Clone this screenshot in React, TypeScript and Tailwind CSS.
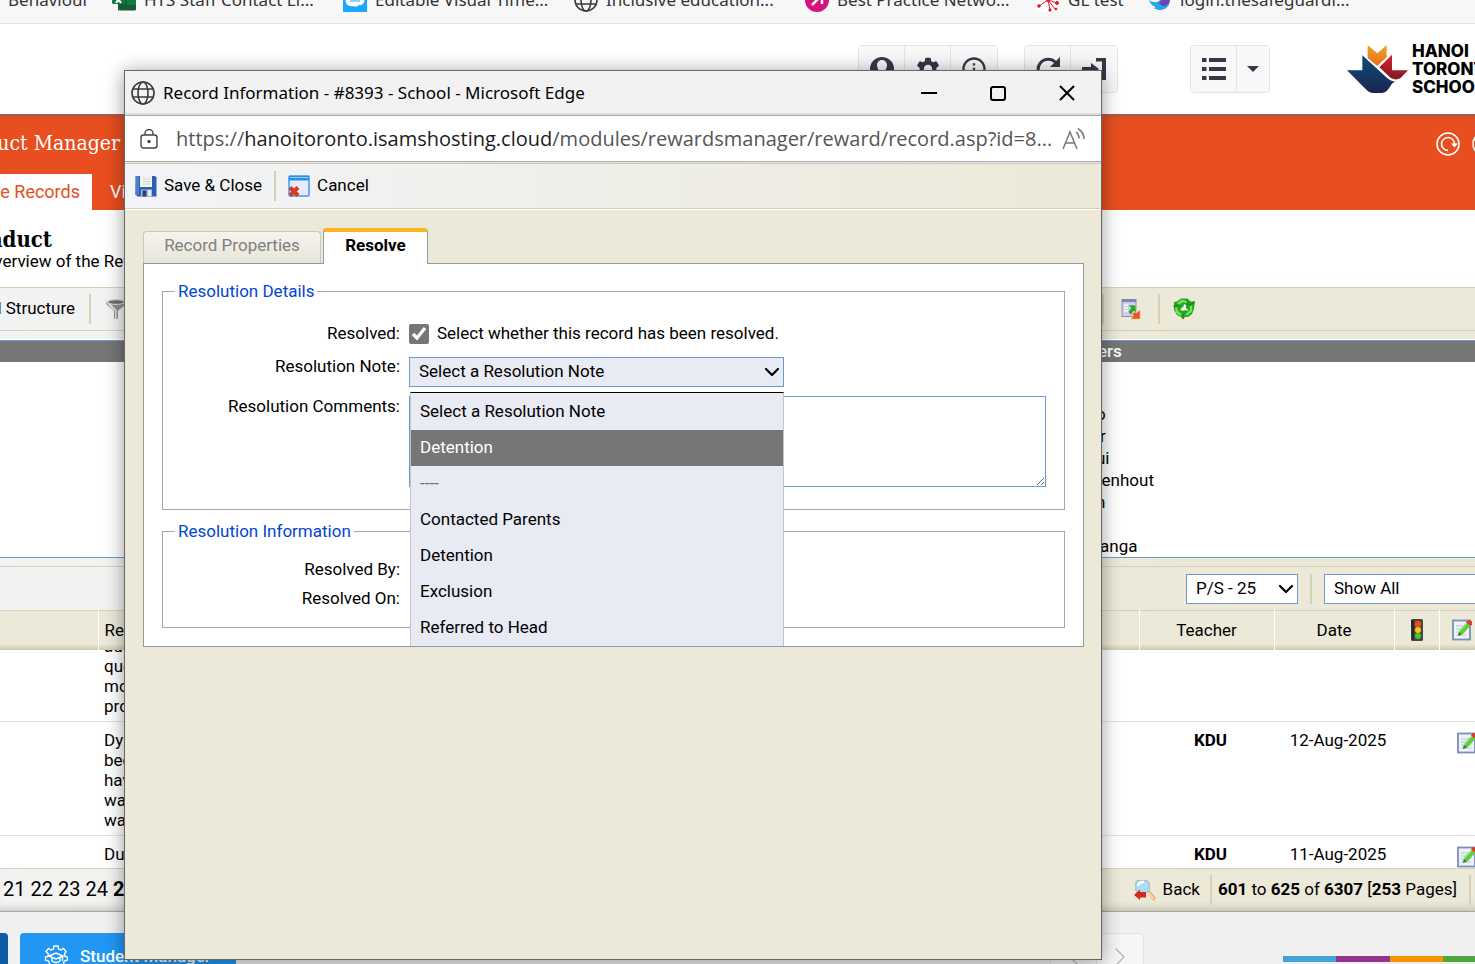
import type { ReactNode } from "react";
import { ChevronDown, ChevronLeft, ChevronRight } from "lucide-react";
import { MdInfoOutline, MdSettings } from "react-icons/md";

const RESOLUTION_NOTES = [
  { label: "Select a Resolution Note" },
  { label: "Detention", active: true },
  { label: "----", disabled: true },
  { label: "Contacted Parents" },
  { label: "Detention" },
  { label: "Exclusion" },
  { label: "Referred to Head" },
];

const TEACHERS = [
  { name: "o", indent: "pl-1" },
  { name: "r", indent: "pl-2" },
  { name: "ui", indent: "pl-1" },
  { name: "denhout", indent: "" },
  { name: "n", indent: "pl-1" },
  { name: "", indent: "" },
  { name: "anga", indent: "pl-2" },
];

const RECORDS = [
  { lines: ["add", "que", "mo", "pro"], teacher: "", date: "" },
  { lines: ["Dyl", "bec", "hav", "wa", "wa"], teacher: "KDU", date: "12-Aug-2025" },
  { lines: ["Du"], teacher: "KDU", date: "11-Aug-2025" },
];

function GlobeIcon() {
  return (
    <svg viewBox="0 0 24 24" className="size-6 shrink-0" fill="none" stroke="#3b3b3b" strokeWidth="1.6">
      <circle cx="12" cy="12" r="11" />
      <ellipse cx="12" cy="12" rx="5" ry="11" />
      <path d="M2 8h20M2 16h20" />
    </svg>
  );
}

function ExcelIcon() {
  return (
    <svg viewBox="0 0 24 24" className="size-6 shrink-0">
      <rect x="6" y="1" width="18" height="21" rx="1.5" fill="#21a366" />
      <path d="M6 12h18v9a1.5 1.5 0 0 1-1.5 1.5h-15A1.5 1.5 0 0 1 6 21z" fill="#185c37" />
      <path d="M15 12h9v5h-9z" fill="#107c41" />
      <rect y="3" width="13" height="13" rx="1.5" fill="#107c41" />
      <path d="M4 8l5 7M9 8l-5 7" stroke="#fff" strokeWidth="2" />
    </svg>
  );
}

function CloudTileIcon() {
  return (
    <svg viewBox="0 0 24 24" className="size-6 shrink-0">
      <path d="M0 0h24v24H0z" fill="#1aa7ff" />
      <path d="M7 18a5 5 0 0 1-4-7 4 4 0 0 1 6-4 5 5 0 0 1 8 1 4 4 0 0 1 4 6 4 4 0 0 1-5 3 5 5 0 0 1-6 1 4 4 0 0 1-3 0z" fill="#fff" />
      <path d="M7 13h10" stroke="#1aa7ff" />
    </svg>
  );
}

function PinkArrowIcon() {
  return (
    <svg viewBox="0 0 24 24" className="size-6 shrink-0">
      <circle cx="12" cy="12" r="12" fill="#d6127c" />
      <path d="M7 17l9-9M9 7.5h8V16" fill="none" stroke="#fff" strokeWidth="2.5" />
    </svg>
  );
}

function SparkIcon() {
  return (
    <svg viewBox="0 0 24 24" className="size-6 shrink-0" fill="#d9202a" stroke="#d9202a">
      <path d="M0 0h24v24H0z" fill="#fff" stroke="none" />
      <path d="M12 12L3 18M12 12l9 3M12 12l2 10M12 12L4 8M12 12l7-6M12 12l7 9" />
      <circle cx="3" cy="18" r="1.3" />
      <circle cx="21" cy="15" r="1.5" />
      <circle cx="14" cy="22" r="1.2" />
      <circle cx="20" cy="21" r="1" />
      <circle cx="12" cy="12" r="1.5" />
    </svg>
  );
}

function BirdIcon() {
  return (
    <svg viewBox="0 0 24 24" className="size-6 shrink-0">
      <path d="M1 12c4 3 9 3 11 0 3-3 7-2 10 1-1 6-5 9-10 9-4 0-6-2-6-2l2-1c-4-1-6-4-7-7z" fill="#22a7ea" />
      <path d="M11 15c2-4 7-5 11-3-1 4-4 6-6 6s-4-1-5-3z" fill="#7340b5" />
    </svg>
  );
}

const BOOKMARKS = [
  { label: "HTS Staff Contact Li...", icon: <ExcelIcon />, width: "w-[231px]" },
  { label: "Editable Visual Time...", icon: <CloudTileIcon />, width: "w-[231px]" },
  { label: "Inclusive education...", icon: <GlobeIcon />, width: "w-[231px]" },
  { label: "Best Practice Netwo...", icon: <PinkArrowIcon />, width: "w-[231px]" },
  { label: "GL test", icon: <SparkIcon />, width: "w-[112px]" },
  { label: "login.thesafeguardi...", icon: <BirdIcon />, width: "w-[231px]" },
];

function SaveIcon() {
  return (
    <svg viewBox="0 0 22 22" className="size-[22px]">
      <path d="M1 1h19l1.5 1.5v19h-19l-2-2V1z" fill="#2a5fb4" />
      <path d="M1 1h3v19H2.5l-2-.5z" fill="#4a7fd0" />
      <path d="M5 1h12v11H5z" fill="#f1f1ee" />
      <path d="M8 4h7M8 6.500h7M8 9h7" stroke="#d0d0d0" />
      <path d="M6 14.500h11v7H6z" fill="#a9bdd2" />
      <path d="M7.500 15.500h4v6h-4z" fill="#26446f" />
      <path d="M13 15h3v6h-3z" fill="#e3ebf3" />
    </svg>
  );
}

function CancelIcon() {
  return (
    <svg viewBox="0 0 22 22" className="size-[22px]">
      <rect x="1" y="1" width="20" height="20" rx="1" fill="#e8ebff" stroke="#3d9cf0" strokeWidth="1.5" />
      <path d="M1 1h20v4.500H1z" fill="#2e8eea" />
      <path d="M2 2.500h18" stroke="#8fd0ff" />
      <path d="M2 12.500l8 8M10 12.500l-8 8" stroke="#d93a20" strokeWidth="4" />
    </svg>
  );
}

function NoteIcon() {
  return (
    <svg viewBox="0 0 20 22" className="h-[22px] w-5">
      <rect x="1" y="1.500" width="17" height="19" fill="#eef3fb" stroke="#7c8fb5" strokeWidth="1.8" />
      <path d="M4 7h8M4 10h7M4 13h5M4 16h10" stroke="#b9c5dc" />
      <path d="M6 17l1-5 8-9 4 3-8 9z" fill="#5fce3a" />
      <path d="M7 13l8-9" stroke="#a8ee85" />
      <path d="M6 17l1-4 3 2.500z" fill="#3b7d2a" />
      <path d="M14 3.500C15 1 19 .5 20 3v3l-1.500.5z" fill="#dc3a2c" />
    </svg>
  );
}

function TrafficLightIcon() {
  return (
    <svg viewBox="0 0 12 22" className="mx-auto h-[22px] w-3">
      <rect width="12" height="22" rx="1.5" fill="#4b4740" />
      <path d="M0 1h3v20H1z" fill="#2b2926" />
      <circle cx="7" cy="5" r="3.2" fill="#f04a16" />
      <circle cx="7" cy="11" r="3" fill="#ffc61a" />
      <circle cx="7" cy="17" r="3" fill="#36cf35" />
    </svg>
  );
}

function FunnelIcon() {
  return (
    <svg viewBox="0 0 22 22" className="size-[22px] shrink-0">
      <path d="M1 4c0 4 6 6 8 9v7.500h4V13c2-3 8-5 8-9z" fill="#8f8f8f" />
      <path d="M3 6c1 3 5 5 7 7v7h1.500v-8C10 10 8 9 6 6z" fill="#e2e2e2" />
      <ellipse cx="11" cy="4" rx="10" ry="3" fill="#d5d5d5" />
      <ellipse cx="11" cy="4" rx="7.5" ry="1.8" fill="#6f6f6f" />
    </svg>
  );
}

function ExportIcon() {
  return (
    <svg viewBox="0 0 20 22" className="h-[22px] w-5">
      <rect x="1" y="1.500" width="14" height="17" fill="#cdd0ea" stroke="#8a8fb8" />
      <path d="M1 1h14v3H1z" fill="#8084b4" />
      <path d="M3 7h4M3 10h4M3 13h4" stroke="#f4f5fd" strokeWidth="1.5" />
      <path d="M7 7h8v8l-2.500-2-2.500 4-3-3 3-4z" fill="#2fa32b" stroke="#c9e8c4" strokeWidth=".6" />
      <path d="M19 12v9h-9l2.500-3-1-2 2-2 2 1z" fill="#f0531c" stroke="#f7b49c" strokeWidth=".6" />
    </svg>
  );
}

function RecycleIcon() {
  return (
    <svg viewBox="0 0 22 22" className="size-[22px]">
      <path d="M1 4l3-.5L8 .5h6l4 3 4-.5-1 8-2 5-4 3h-3l-2 2.500-2-2.500-4-2-3-5z" fill="#28a820" />
      <path d="M5 6l4-3 5 1M3 10l1 4 4 3M18 8v5l-5 4" fill="none" stroke="#7be35e" strokeWidth="2.2" />
      <path d="M0 8l6-1 1 2M14 1l1 6 6-2M10 21v-5" fill="none" stroke="#15750f" strokeWidth=".8" />
      <path d="M11 6l2 1v3l3 3-4-1-2 1-1-1-2 1 2-4 1 1z" fill="#f3f9ee" />
    </svg>
  );
}

function BackIcon() {
  return (
    <svg viewBox="0 0 22 22" className="size-[22px]">
      <path d="M12 12l3-1 7 8-2.500 3z" fill="#f2a766" />
      <path d="M13 12l7 8" stroke="#fde0c0" strokeWidth="1.5" />
      <path d="M3 1h10l3 3v8l-3 2H3l-2-3V3z" fill="#b5c1cb" />
      <path d="M4 2.500h8l2.500 2.500v6L12 13H4l-1.500-2V4z" fill="#a9def8" />
      <path d="M4 7c0-3 3-4 6-4" stroke="#fff" strokeWidth="2.500" fill="none" />
      <path d="M0 16l6-5.500V13h6v5.500H6V21z" fill="#d8281c" />
    </svg>
  );
}

function SchoolLogo() {
  return (
    <svg viewBox="0 0 183 144" className="h-12 w-[61px] shrink-0">
      <defs>
        <linearGradient id="logo-blue" x1="0" y1="0" x2="0" y2="1">
          <stop offset="0" stopColor="#0b5078" />
          <stop offset="1" stopColor="#1b2450" />
        </linearGradient>
        <linearGradient id="logo-red" x1="0" y1="0" x2="0" y2="1">
          <stop offset="0" stopColor="#dc1f2e" />
          <stop offset="1" stopColor="#7d1a26" />
        </linearGradient>
        <linearGradient id="logo-orange" x1="0" y1="0" x2="0" y2="1">
          <stop offset="0" stopColor="#eca52b" />
          <stop offset="1" stopColor="#ea6a20" />
        </linearGradient>
      </defs>
      <path d="M62 0l29 25 28-25v36L91 63 62 40z" fill="url(#logo-orange)" />
      <path d="M135 29v47h48l-20 21c-8 8-24 9-34 0L97 67z" fill="url(#logo-red)" />
      <path d="M46 29l74 68c10 9 20 13 29 11-10 2-14 8-20 17-7 11-14 18-24 19H78c-8-1-14-4-20-10L0 76h46z" fill="url(#logo-blue)" />
      <path d="M46 28l74 68c10 9 18 12 29 11" fill="none" stroke="#fff" strokeWidth="4" />
    </svg>
  );
}

function Separator() {
  return <span className="h-[30px] w-0.5 shrink-0 bg-[#d6d0b5]" />;
}

function HeaderButton({ label, children }: { label: string; children: ReactNode }) {
  return (
    <button
      type="button"
      aria-label={label}
      className="flex h-[46px] w-[46px] items-center justify-center border-r border-[#e4e4e8] bg-[#f8f8f9] text-[#363848] last:border-r-0"
    >
      {children}
    </button>
  );
}

function SelectArrow() {
  return <ChevronDown className="pointer-events-none absolute top-[3px] right-0 size-6" strokeWidth={2.2} />;
}

function Bookmarks() {
  return (
    <nav className="-mt-6 flex h-12 shrink-0 items-center border-b border-[#e5e5e5] bg-[#f7f7f7] font-['Noto_Sans',sans-serif] text-[17px] whitespace-nowrap text-[#333]">
      <a href="#" className="w-[112px] shrink-0 pl-2">
        Behaviour
      </a>
      {BOOKMARKS.map((b) => (
        <a key={b.label} href="#" className={`flex shrink-0 items-center gap-2 ${b.width}`}>
          {b.icon}
          {b.label}
        </a>
      ))}
    </nav>
  );
}

function SiteHeader() {
  return (
    <header className="flex h-[90px] shrink-0 items-center justify-end">
      <div className="mr-[26px] flex overflow-hidden rounded border border-[#e4e4e8]">
        <HeaderButton label="Account">
          <svg viewBox="0 0 24 24" className="size-6">
            <circle cx="12" cy="12" r="12" fill="currentColor" />
            <path d="M12 3a5 5 0 0 0-5 5c0 3 2 6 3 7l-5 3c4 4 10 4 14 0l-5-3c1-1 3-4 3-7a5 5 0 0 0-5-5z" fill="#f8f8f9" />
          </svg>
        </HeaderButton>
        <HeaderButton label="Settings">
          <MdSettings className="size-7" />
        </HeaderButton>
        <HeaderButton label="Information">
          <MdInfoOutline className="size-7" />
        </HeaderButton>
      </div>
      <div className="mr-[72px] flex overflow-hidden rounded border border-[#e4e4e8]">
        <HeaderButton label="Refresh">
          <svg viewBox="0 0 24 24" className="size-6" fill="none" stroke="currentColor" strokeWidth="3">
            <path d="M20 6A10 10 0 1 0 22 14" />
            <path d="M24 0v10H14z" fill="currentColor" stroke="none" />
          </svg>
        </HeaderButton>
        <HeaderButton label="Log out">
          <svg viewBox="0 0 24 24" className="size-6" fill="currentColor">
            <path d="M14 1h10v22H14v-3.500h6v-15h-6z" />
            <path d="M0 10h9V6l8 6-8 6v-4H0z" />
          </svg>
        </HeaderButton>
      </div>
      <div className="mr-[77px] flex overflow-hidden rounded border border-[#e4e4e8]">
        <HeaderButton label="List">
          <svg viewBox="0 0 24 24" className="size-6" fill="currentColor">
            <path d="M0 1h4.500v4H0zM7 1h17v4H7zM0 10h4.500v4H0zM7 10h17v4H7zM0 19h4.500v4H0zM7 19h17v4H7z" />
          </svg>
        </HeaderButton>
        <button type="button" aria-label="More" className="flex h-[46px] w-8 items-center justify-center bg-[#f8f8f9] text-[#363848]">
          <svg viewBox="0 0 12 6" className="h-1.5 w-3" fill="currentColor">
            <path d="M0 0h12L6 6z" />
          </svg>
        </button>
      </div>
      <div className="flex w-32 shrink-0 items-center gap-1 overflow-hidden">
        <SchoolLogo />
        <p className="font-[Inter,sans-serif] text-[17px] leading-[18px] font-extrabold text-black">
          HANOI
          <br />
          TORONTO
          <br />
          SCHOOL
        </p>
      </div>
    </header>
  );
}

function ModuleBanner() {
  return (
    <div className="flex h-24 shrink-0 flex-col justify-between bg-[#e84e20] shadow-[inset_0_4px_3px_-1px_#b25a44]">
      <div className="flex h-[60px] items-center justify-between">
        <div className="flex w-[120px] justify-end font-['DejaVu_Serif_Condensed','DejaVu_Serif',serif] text-[21px] whitespace-nowrap text-white">
          uct Manager
        </div>
        <div className="flex w-[39px] shrink-0 gap-3 overflow-hidden text-white">
          {["Reload", "Help"].map((label) => (
            <button key={label} type="button" aria-label={label} className="shrink-0">
              <svg viewBox="0 0 24 24" className="size-6" fill="none" stroke="currentColor" strokeWidth="1.6">
                <circle cx="12" cy="12" r="11" />
                <path d="M12 18.500a6.500 6.500 0 1 1 6.500-6" />
                <path d="M15 11.500h7l-3.500 4z" fill="currentColor" stroke="none" />
              </svg>
            </button>
          ))}
        </div>
      </div>
      <div className="flex h-9 text-lg whitespace-nowrap">
        <a href="#" className="flex w-[92px] items-center justify-end bg-white pr-3 text-[#e84e20]">
          ge Records
        </a>
        <a href="#" className="flex items-center pl-[18px] text-white">
          Vi
        </a>
      </div>
    </div>
  );
}

function RecordsTable() {
  return (
    <>
      <table className="w-full shrink-0 table-fixed border-t border-[#d6d0b5]">
        <colgroup>
          <col className="w-[98px]" />
          <col />
          <col className="w-[135px]" />
          <col className="w-[120px]" />
          <col className="w-[45px]" />
          <col className="w-9" />
        </colgroup>
        <thead>
          <tr className="h-[39px] bg-linear-to-b from-[#ece9d8] from-85% to-[#cdc8b2] [&>th]:border-l [&>th]:border-l-white [&>th]:font-normal [&>th:first-child]:border-l-0">
            <th aria-label="Pupil" />
            <th className="pl-1.5 text-left">Re</th>
            <th>Teacher</th>
            <th>Date</th>
            <th aria-label="Status">
              <TrafficLightIcon />
            </th>
            <th aria-label="Notes" className="pl-3">
              <NoteIcon />
            </th>
          </tr>
        </thead>
      </table>
      <div className="h-[218px] shrink-0 overflow-hidden bg-white">
        <table className="-mt-[22px] w-full table-fixed">
          <colgroup>
            <col className="w-[98px]" />
            <col />
            <col className="w-[135px]" />
            <col className="w-[120px]" />
            <col className="w-[45px]" />
            <col className="w-8" />
          </colgroup>
          <tbody>
            {RECORDS.map((r, i) => (
              <tr key={i} className="border-b border-[#e3e3e3] align-top leading-5 [&>td]:pt-2 [&>td]:pb-[5px]">
                <td />
                <td className="pl-1.5">
                  {r.lines.map((line, n) => (
                    <div key={n}>{line}</div>
                  ))}
                </td>
                <td className="text-center font-bold">{r.teacher}</td>
                <td className="text-center">{r.date}</td>
                <td />
                <td className="pl-3.5">
                  {r.teacher && (
                    <div className="pt-0.5">
                      <NoteIcon />
                    </div>
                  )}
                </td>
              </tr>
            ))}
          </tbody>
        </table>
      </div>
    </>
  );
}

function ManagerPage() {
  return (
    <main className="flex shrink-0 flex-col bg-linear-to-r from-[#f3f3f3] to-[#ece9d8] to-80%">
      <div className="flex h-[77px] shrink-0 flex-col justify-center overflow-hidden bg-white whitespace-nowrap">
        <h1 className="flex w-[52px] justify-end font-['DejaVu_Serif_Condensed','DejaVu_Serif',serif] text-[22px] leading-6 font-bold">
          nduct
        </h1>
        <p className="flex w-[136px] justify-end leading-5">verview of the Rew</p>
      </div>

      <div className="flex h-11 items-center justify-between border-y border-[#d6d0b5]">
        <div className="flex items-center whitespace-nowrap">
          <button type="button" className="mr-3.5 flex w-[75px] justify-end">
            l Structure
          </button>
          <Separator />
          <button type="button" aria-label="Filter" className="ml-3.5">
            <FunnelIcon />
          </button>
        </div>
        <div className="flex w-[373px] items-center">
          <Separator />
          <button type="button" aria-label="Export" className="mx-[17px]">
            <ExportIcon />
          </button>
          <Separator />
          <button type="button" aria-label="Recycle" className="ml-[13px]">
            <RecycleIcon />
          </button>
        </div>
      </div>

      <section className="mt-2 border-y border-[#6f9ad0] border-t-white bg-white">
        <h2 className="flex h-[22px] items-center justify-end border-t border-[#6f9ad0] bg-[#767676] font-medium text-white">
          <span className="w-[377px]">ers</span>
        </h2>
        <ul className="ml-auto h-[195px] w-[383px] pt-[41px] leading-[22px]">
          {TEACHERS.map((t, i) => (
            <li key={i} className={`h-[22px] ${t.indent}`}>
              {t.name}
            </li>
          ))}
        </ul>
      </section>

      <div className="mt-2 flex h-11 items-center justify-end border-t border-[#d6d0b5]">
        <div className="relative mr-3">
          <select aria-label="Page size" className="block h-[30px] w-28 appearance-none border border-[#6f9ad0] bg-white pl-[9px]">
            <option>P/S - 25</option>
          </select>
          <SelectArrow />
        </div>
        <Separator />
        <select aria-label="Filter records" className="ml-3 h-[30px] w-[151px] appearance-none border border-r-0 border-[#6f9ad0] bg-white pl-[9px]">
          <option>Show All</option>
        </select>
      </div>

      <RecordsTable />

      <div className="flex h-11 items-center justify-between border-t border-b border-t-[#d6d0b5] border-b-[#aca899] shadow-[inset_0_-8px_8px_-6px_#0003]">
        <div className="flex gap-[5px] pb-0.5 pl-[3px] text-[20px]">
          <a href="#">21</a>
          <a href="#">22</a>
          <a href="#">23</a>
          <a href="#">24</a>
          <b>25</b>
        </div>
        <div className="flex items-center whitespace-nowrap">
          <button type="button" className="mr-2.5 flex items-center gap-[7px]">
            <BackIcon />
            Back
          </button>
          <Separator />
          <p className="mr-3 ml-1.5">
            <b>601</b> to <b>625</b> of <b>6307</b> [<b>253</b> Pages]
          </p>
          <Separator />
          <span className="w-1" />
        </div>
      </div>
    </main>
  );
}

function Taskbar() {
  return (
    <footer className="flex flex-1 items-start overflow-hidden bg-[#f0f0f0] pt-[21px]">
      <button type="button" aria-label="Home" className="mr-3 h-12 w-2 rounded-tr bg-[#0a5ca8]" />
      <button type="button" className="flex h-12 w-[216px] items-center gap-3 rounded bg-[#2196f3] pl-6 text-[17px] font-medium whitespace-nowrap text-white">
        <svg viewBox="0 0 24 24" className="size-6" fill="none" stroke="currentColor" strokeWidth="1.4">
          <path d="M10 1h4l.5 3 2.500 1 2.500-1.500 2.500 3L20.500 9l.5 2.500 2.500.5v3l-3 1-1 2 1 3-3 2-2-2-3 1-3-1-2 2-3-2 1-3-1-2-3-1v-3l2.500-.5.5-2.500L2 6.500l2.500-3L7 5l2.500-1z" />
          <path d="M5 11l7-3 7 3-7 3zM8 12.500V16c2 2 6 2 8 0v-3.500M18.500 11v5" />
        </svg>
        Student Manager
      </button>
      <div className="ml-auto flex h-12 shrink-0 rounded border border-[#e2e2e2] bg-[#f6f6f6] text-[#b5b5b5]">
        <button type="button" aria-label="Previous" className="flex w-[46px] items-center justify-center border-r border-[#e2e2e2]">
          <ChevronLeft className="size-8" strokeWidth={1} />
        </button>
        <button type="button" aria-label="Next" className="flex w-[46px] items-center justify-center">
          <ChevronRight className="size-8" strokeWidth={1} />
        </button>
      </div>
      <div className="mt-[23px] ml-[139px] grid h-1.5 w-48 shrink-0 grid-cols-[53px_54px_53px_1fr]">
        <span className="bg-[#41a3dc]" />
        <span className="bg-[#93358d]" />
        <span className="bg-[#f59300]" />
        <span className="bg-[#4fa83d]" />
      </div>
    </footer>
  );
}

function ResolveForm() {
  return (
    <form className="relative h-[384px] overflow-hidden border border-[#919b9c] bg-white px-[18px] pt-[15px]">
      <fieldset className="h-[231px] border border-[#aca899] pt-4 pr-[18px] pl-3">
        <legend className="px-[3px] text-[#0046d5]">Resolution Details</legend>
        <div className="grid grid-cols-[225px_1fr] gap-x-[9px]">
          <label htmlFor="resolved" className="h-[33px] pt-0.5 text-right leading-5">
            Resolved:
          </label>
          <div className="flex h-[26px] items-center gap-2">
            <input id="resolved" type="checkbox" defaultChecked className="size-5 accent-[#767676]" />
            <label htmlFor="resolved">Select whether this record has been resolved.</label>
          </div>
          <label htmlFor="note" className="h-[42px] pt-0.5 text-right leading-5">
            Resolution Note:
          </label>
          <div className="relative mt-[3px] w-[375px]">
            <select id="note" className="block h-[30px] w-full appearance-none border border-[#6f9ad0] bg-[#e8eaf4] pl-[9px]">
              <option>Select a Resolution Note</option>
            </select>
            <SelectArrow />
            <ul
              role="listbox"
              aria-label="Resolution notes"
              className="absolute top-[35px] left-px z-10 h-[300px] w-[374px] border border-[#c4c6cf] border-t-black bg-[#e8eaf4] pt-px"
            >
              {RESOLUTION_NOTES.map((n, i) => (
                <li
                  key={i}
                  role="option"
                  aria-selected={!!n.active}
                  className={`flex h-9 items-center pl-[9px] ${n.active ? "bg-[#767676] text-white" : ""} ${n.disabled ? "text-[#6d6d6d]" : ""}`}
                >
                  {n.label}
                </li>
              ))}
            </ul>
          </div>
          <label htmlFor="comments" className="text-right leading-5">
            Resolution Comments:
          </label>
          <textarea id="comments" className="block h-[91px] w-full border border-[#6f9ad0]" />
        </div>
      </fieldset>

      <fieldset className="mt-[9px] h-[109px] border border-[#aca899] pt-3.5 pr-[18px] pl-3">
        <legend className="px-[3px] text-[#0046d5]">Resolution Information</legend>
        <dl className="grid grid-cols-[225px_1fr] gap-x-[9px] gap-y-[9px] leading-5">
          <dt className="text-right">Resolved By:</dt>
          <dd />
          <dt className="text-right">Resolved On:</dt>
          <dd />
        </dl>
      </fieldset>
    </form>
  );
}

function RecordWindow() {
  return (
    <div
      role="dialog"
      aria-label="Record Information"
      className="absolute top-[70px] right-[373px] bottom-1 left-[124px] flex flex-col border border-[#666] bg-[#ece9d8] shadow-[0_2px_18px_rgba(0,0,0,0.4)]"
    >
      <div className="flex h-[45px] shrink-0 items-center border-b border-[#a9abad] bg-[#f2f2f2] pr-[26px] pl-1.5 font-['Noto_Sans',sans-serif] text-[17px] shadow-[inset_0_-2px_0_#dcdcdc]">
        <GlobeIcon />
        <span className="ml-2 flex-1 truncate">Record Information - #8393 - School - Microsoft Edge</span>
        <div className="flex gap-[53px]">
          <button type="button" aria-label="Minimize">
            <svg viewBox="0 0 16 16" className="size-4" fill="none" stroke="#000" strokeWidth="2">
              <path d="M0 8h16" />
            </svg>
          </button>
          <button type="button" aria-label="Maximize">
            <svg viewBox="0 0 16 16" className="size-4" fill="none" stroke="#000" strokeWidth="2">
              <rect x="1" y="2" width="14" height="13" rx="2" />
            </svg>
          </button>
          <button type="button" aria-label="Close">
            <svg viewBox="0 0 16 16" className="size-4" fill="none" stroke="#000" strokeWidth="2">
              <path d="M1 1l14 14M15 1L1 15" />
            </svg>
          </button>
        </div>
      </div>

      <div className="flex h-[46px] shrink-0 items-center border-b border-[#a9abad] bg-white pr-[15px] pl-[15px] font-['Open_Sans',sans-serif] text-[20px] text-[#555]">
        <svg viewBox="0 0 18 20" className="h-5 w-[18px] shrink-0" fill="none" stroke="#444" strokeWidth="1.4">
          <rect x="1" y="6" width="16" height="13" rx="2.5" />
          <path d="M5 6V4.500a4 4 0 0 1 8 0V6" />
          <circle cx="9" cy="12.500" r="1" fill="#444" />
        </svg>
        <span className="ml-[18px] flex-1 whitespace-nowrap">
          https://<span className="text-[#1b1b1b]">hanoitoronto.isamshosting.cloud</span>
          /modules/rewardsmanager/reward/record.asp?id=8...
        </span>
        <svg viewBox="0 0 24 22" className="h-[22px] w-6 shrink-0" fill="none" stroke="#777" strokeWidth="1.5">
          <path d="M1 21L8 4l7 17M3.500 15h9M14 4c2 1.500 3 4 3 6.500M16 .5c4 2.500 6 6 6 10.500" />
        </svg>
      </div>

      <div className="mt-px flex h-[46px] shrink-0 items-center border-t border-b border-t-[#c5c5c5] border-b-[#d6d0b5] bg-linear-to-r from-[#f3f4f8] to-[#ece9d8] px-2.5">
        <button type="button" className="mr-3 flex items-center gap-[7px] whitespace-nowrap">
          <SaveIcon />
          Save &amp; Close
        </button>
        <Separator />
        <button type="button" className="ml-3 flex items-center gap-[7px]">
          <CancelIcon />
          Cancel
        </button>
      </div>

      <div className="border-t border-white px-[18px] pt-[18px] pr-[17px]">
        <div role="tablist" className="flex h-[35px] items-end pr-px">
          <button
            type="button"
            role="tab"
            aria-selected={false}
            className="mr-0.5 h-8 w-[178px] rounded-t border border-b-0 border-[#c3c9c6] bg-linear-to-b from-[#f4f3ee] to-[#e9e6d8] pb-1 text-[#808080]"
          >
            Record Properties
          </button>
          <button
            type="button"
            role="tab"
            aria-selected
            className="z-10 -mb-px h-9 w-[105px] rounded-t border border-t-4 border-b-0 border-[#919b9c] border-t-[#fbb321] bg-white pb-1 font-bold"
          >
            Resolve
          </button>
        </div>
        <ResolveForm />
      </div>
    </div>
  );
}

export default function App() {
  return (
    <div className="relative flex h-screen flex-col overflow-hidden bg-white font-[Roboto,sans-serif] text-[17px] text-black">
      <Bookmarks />
      <SiteHeader />
      <ModuleBanner />
      <ManagerPage />
      <Taskbar />
      <RecordWindow />
    </div>
  );
}
